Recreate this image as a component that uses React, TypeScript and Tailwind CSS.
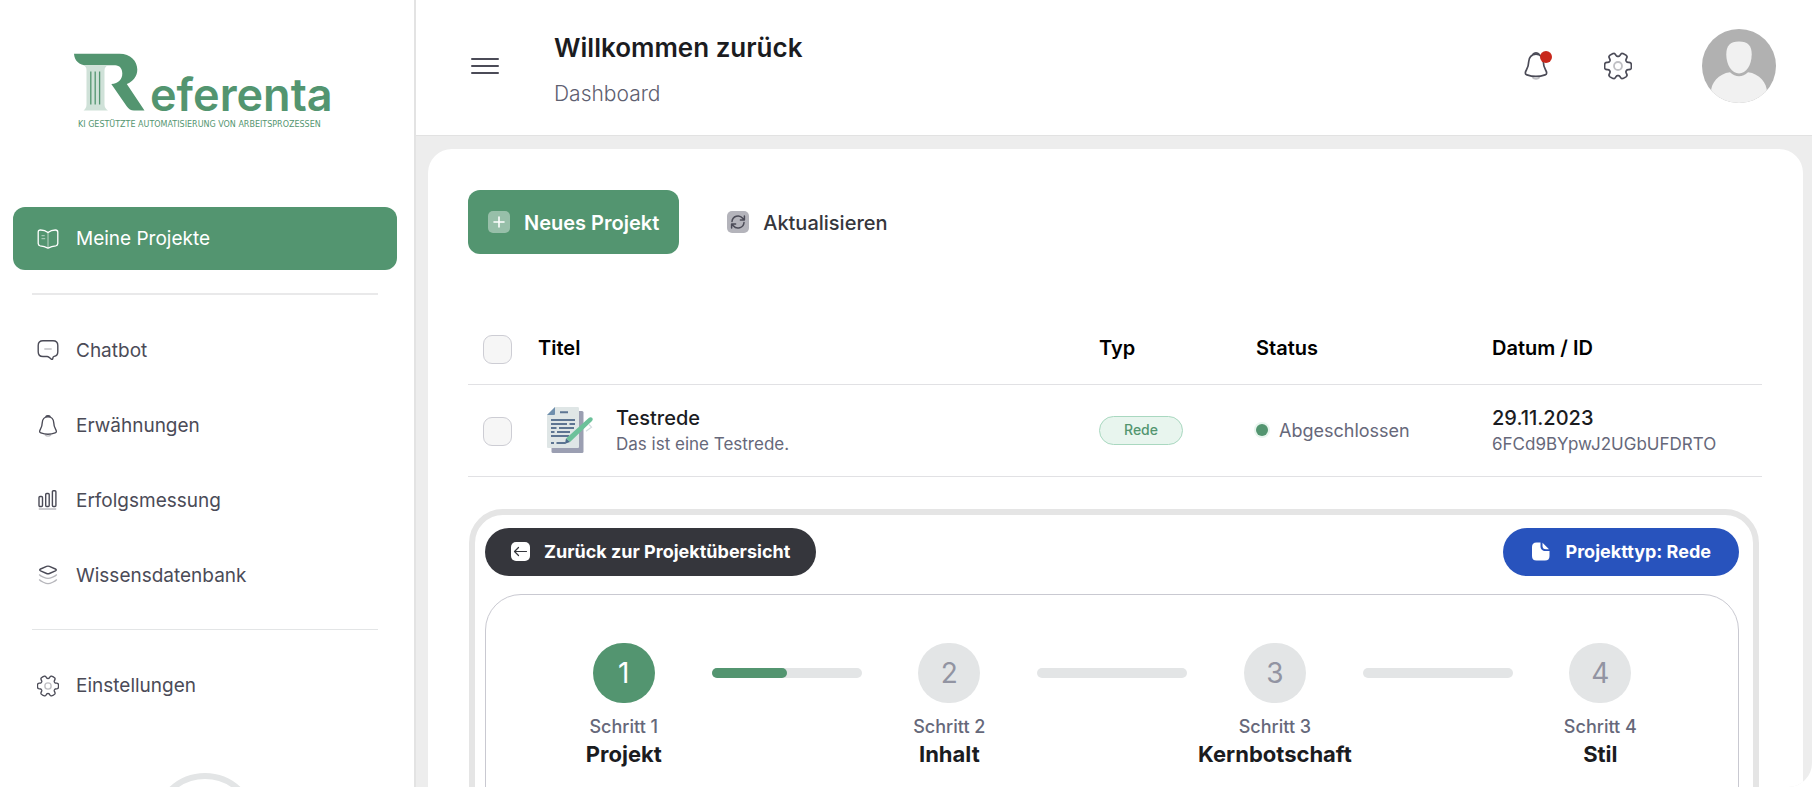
import { useState, type ReactNode } from "react";

interface INavItem {
  label: string;
  icon: ReactNode;
}

interface IProject {
  id: string;
  title: string;
  description: string;
  type: string;
  status: string;
  date: string;
}

const projects: IProject[] = [
  {
    id: "6FCd9BYpwJ2UGbUFDRTO",
    title: "Testrede",
    description: "Das ist eine Testrede.",
    type: "Rede",
    status: "Abgeschlossen",
    date: "29.11.2023",
  },
];

const steps = [
  { label: "Schritt 1", name: "Projekt", progress: 50 },
  { label: "Schritt 2", name: "Inhalt", progress: 0 },
  { label: "Schritt 3", name: "Kernbotschaft", progress: 0 },
  { label: "Schritt 4", name: "Stil", progress: 0 },
];

// Outline of a gear with six wide teeth, centred in a 28x28 box
function gearPath(): string {
  const points: string[] = [];
  for (let deg = 0; deg < 360; deg += 2) {
    const a = (deg * Math.PI) / 180;
    const r = 11.4 + 2 * Math.tanh(2.4 * (Math.cos(6 * a) + 0.35));
    points.push(`${(14 + r * Math.cos(a)).toFixed(2)} ${(14 + r * Math.sin(a)).toFixed(2)}`);
  }
  return `M${points.join("L")}Z`;
}

const GEAR_PATH = gearPath();

function GearIcon({ className }: { className: string }) {
  return (
    <svg viewBox="0 0 28 28" className={className} fill="none" stroke="currentColor" aria-hidden="true">
      <path d={GEAR_PATH} strokeWidth="1.7" strokeLinejoin="round" />
      <circle cx="14" cy="14" r="4" strokeWidth="1.8" opacity="0.35" />
    </svg>
  );
}

function BellIcon({ className }: { className: string }) {
  return (
    <svg viewBox="0 0 24 28" className={className} fill="none" stroke="currentColor" aria-hidden="true">
      <path
        d="M12 2.2c-4.4 0-7.2 3.3-7.3 7.5-.1 3.2-.7 5.6-2.300 8.300-1.300 2.200-1.700 4.100.5 4.900 5.500 1.900 12.700 1.900 18.200 0 2.200-.8 1.800-2.700.5-4.900-1.600-2.700-2.200-5.100-2.300-8.300-.1-4.200-2.900-7.500-7.300-7.500z"
        strokeWidth="1.7"
        strokeLinejoin="round"
      />
      <path d="M9 2.3c1.5-1.800 4.500-1.800 6 0" strokeWidth="1.8" />
      <path d="M8.300 25.200c1.900 2.200 5.500 2.200 7.400 0" strokeWidth="1.8" opacity="0.35" />
    </svg>
  );
}

function BookIcon() {
  return (
    <svg viewBox="0 0 22 20" className="h-5 w-[22px]" fill="none" stroke="currentColor" aria-hidden="true">
      <path
        d="M11 3.500C9.500 2.300 6.500 1 3.600 1 2 1 1.200 1.700 1.200 3.200v11.400c0 1.300.7 2 2 2.200 2.700.3 5.600 1.200 7.800 2.300 2.200-1.100 5.100-2 7.800-2.300 1.300-.2 2-.9 2-2.200V3.200c0-1.500-.8-2.200-2.400-2.200-2.900 0-5.900 1.300-7.400 2.500z"
        strokeWidth="1.3"
        strokeLinejoin="round"
      />
      <path d="M11 3.500v15.400M4.500 6.700h3.200M4.500 9.700h3.700" strokeWidth="1" opacity="0.6" />
    </svg>
  );
}

function ChatIcon() {
  return (
    <svg viewBox="0 0 22 22" className="size-[22px]" fill="none" stroke="currentColor" aria-hidden="true">
      <path
        d="M6 .7h10c3.200 0 4.800 1.600 4.800 4.800v6.200c0 2.700-1.300 4.300-3.700 4.700-.9.200-1.100.7-1.200 1.500-.1 1.500-.7 1.900-1.900 1-.9-.7-2.100-2.400-3.800-2.400H6c-3.200 0-4.800-1.600-4.800-4.800V5.500C1.200 2.300 2.800.7 6 .7z"
        strokeWidth="1.4"
        strokeLinejoin="round"
      />
      <path d="M7.300 9h7.400" strokeWidth="1.3" opacity="0.4" />
    </svg>
  );
}

function ChartIcon() {
  return (
    <svg viewBox="0 0 22 22" className="size-[22px]" fill="none" stroke="currentColor" aria-hidden="true">
      <rect x="2" y="6.500" width="3.500" height="10" rx="1" strokeWidth="1.4" />
      <rect x="8.700" y="3.500" width="3.500" height="13" rx="1" strokeWidth="1.4" />
      <rect x="15.400" y=".700" width="3.500" height="15.800" rx="1" strokeWidth="1.4" />
      <path d="M1.800 19h17.400" strokeWidth="1.4" opacity="0.4" />
    </svg>
  );
}

function LayersIcon() {
  return (
    <svg viewBox="0 0 22 22" className="size-[22px]" fill="none" stroke="currentColor" aria-hidden="true">
      <path
        d="M9.600 1.400c.9-.4 1.900-.4 2.800 0l6 2.600c1.200.6 1.200 1.300 0 1.900l-6 2.600c-.9.400-1.900.4-2.800 0l-6-2.600c-1.200-.6-1.200-1.300 0-1.900z"
        strokeWidth="1.4"
        strokeLinejoin="round"
      />
      <path d="M2.200 9.500c1.500 1.700 6.500 3.900 8.800 3.900s7.300-2.200 8.800-3.900" strokeWidth="1.3" opacity="0.4" />
      <path d="M2.200 14.500c1.500 1.700 6.500 4.200 8.800 4.200s7.300-2.500 8.800-4.200" strokeWidth="1.3" opacity="0.4" />
    </svg>
  );
}

function DocumentPenIcon() {
  return (
    <svg viewBox="0 0 46 46" className="size-[46px] shrink-0" fill="none" aria-hidden="true">
      <rect x="4.500" y="4" width="32" height="42" rx="1.500" fill="#9b9fb2" />
      <path d="M8 0h22.500c1 0 1.500.5 1.500 1.500v38c0 1-.5 1.500-1.500 1.500h-29C.5 41 0 40.500 0 39.500V8z" fill="#dfe6e6" />
      <path d="M8 0v6.500C8 7.500 7.500 8 6.500 8H0z" fill="#6f8fad" />
      <path
        d="M13 5.300h8M4 13h24M4 17h16M22.500 17H28M4 21h5.500M12 21h15M4 25h3.500M10 25h13M4 29h18M4 36h3M9.500 36h9"
        stroke="#5d7592"
        strokeWidth="1.900"
      />
      <path d="M19 31.500 42 10.800c2.500-1.800 5 1 3 3.200L23 35z" fill="#6cc19a" />
      <path d="m19 31.500 4 3.500-5 1.700z" fill="#4d6b8a" />
      <path d="m42 17.500 2.500 2.700-5.500 4" stroke="#d4dce0" strokeWidth="1.200" />
    </svg>
  );
}

function Logo() {
  return (
    <a href="#" aria-label="Referenta" className="mx-auto block w-[262px] text-[#539570]">
      <div className="flex items-end">
        <svg viewBox="0 0 71 58" className="h-[58px] w-[71px] shrink-0" aria-hidden="true">
          <path
            d="M0 .7h45.500C56.500.7 63.300 8 63.300 16.500c0 6.500-4 12-10.500 14.500L70.500 57.500H60c-3 0-5.500-1.500-7.300-4.300L37.300 31C44.500 30.500 48.300 26.500 48.300 20.500c0-5-2.800-8-7-8.200H13C5 12.300.5 7.500 0 .7z"
            fill="currentColor"
          />
          <path d="M9.500 12.300H34c-2 1-3.500 2.500-3.500 5v34c0 3 1 4.500 3.500 6.200H9.500c2.200-1.700 3-3.200 3-6.200v-34c0-2.500-1-4-3-5z" fill="#cfe1d8" />
          <path d="M16.800 18.500v33M21.200 18.500v33M25.600 18.500v33" stroke="#539570" strokeWidth="1.3" />
        </svg>
        <span className="-mb-[9px] ml-[5px] font-[Inter,sans-serif] text-[45px] leading-[50px] font-semibold">
          eferenta
        </span>
      </div>
      <div className="mt-[10px] ml-1 font-['DejaVu_Sans',sans-serif] text-[8px] leading-[8px] whitespace-nowrap">
        KI GESTÜTZTE AUTOMATISIERUNG VON ARBEITSPROZESSEN
      </div>
    </a>
  );
}

const mainNav: INavItem[] = [
  { label: "Chatbot", icon: <ChatIcon /> },
  { label: "Erwähnungen", icon: <BellIcon className="size-[22px]" /> },
  { label: "Erfolgsmessung", icon: <ChartIcon /> },
  { label: "Wissensdatenbank", icon: <LayersIcon /> },
];

function NavLink({ label, icon, active }: INavItem & { active?: boolean }) {
  return (
    <a
      href="#"
      className={`flex h-[63px] items-center gap-[17px] rounded-xl px-6 text-[19px] ${
        active ? "bg-[#539570] text-white" : "text-[#4b4b57]"
      }`}
    >
      {icon}
      <span className="pt-[2px]">{label}</span>
    </a>
  );
}

function Sidebar() {
  return (
    <aside className="flex w-[416px] shrink-0 flex-col overflow-hidden border-r-2 border-[#e3e3e3] bg-white pr-[17px] pl-[13px]">
      <div className="h-[207px] shrink-0 pt-[53px]">
        <Logo />
      </div>
      <nav className="shrink-0">
        <NavLink label="Meine Projekte" icon={<BookIcon />} active />
        <hr className="mx-[19px] mt-[23px] mb-6 border-t-2 border-[#e9e9ea]" />
        <div className="flex flex-col gap-3">
          {mainNav.map((item) => (
            <NavLink key={item.label} {...item} />
          ))}
        </div>
        <hr className="mx-[19px] mt-[22px] mb-6 border-[#e3e5e6]" />
        <NavLink label="Einstellungen" icon={<GearIcon className="size-[22px]" />} />
      </nav>
      <div className="mx-auto mt-14 size-[104px] shrink-0 rounded-full border-[6px] border-[#e3e5e6]" />
    </aside>
  );
}

function Header() {
  return (
    <header className="flex h-[136px] shrink-0 items-center border-b border-[#e2e2e2] bg-white pr-9 pb-[3px] pl-[55px]">
      <button aria-label="Menü" className="flex w-7 flex-col gap-[5px] text-[#4b4b57]">
        <span className="h-[2px] rounded-full bg-current" />
        <span className="h-[2px] rounded-full bg-current" />
        <span className="h-[2px] rounded-full bg-current" />
      </button>
      <div className="ml-[55px] flex-1 pt-[7px]">
        <h1 className="text-[26px] leading-8 font-semibold text-[#1b1c1f]">Willkommen zurück</h1>
        <p className="mt-4 text-[21px] leading-7 font-light text-[#5e6070]">Dashboard</p>
      </div>
      <button aria-label="Benachrichtigungen" className="relative mr-14 text-[#4b4b57]">
        <BellIcon className="h-7 w-6" />
        <span className="absolute -top-px -right-1 size-3 rounded-full bg-[#c8281c]" />
      </button>
      <button aria-label="Einstellungen" className="mr-[70px] text-[#4b4b57]">
        <GearIcon className="size-7" />
      </button>
      <button aria-label="Profil">
        <svg viewBox="0 0 74 74" className="size-[74px]" aria-hidden="true">
          <clipPath id="avatar">
            <circle cx="37" cy="37" r="37" />
          </clipPath>
          <g clipPath="url(#avatar)">
            <rect width="74" height="74" fill="#b1b1b1" />
            <path d="M9 63c0-9 7.500-18.500 19-19.800 5.500 5.300 12.500 5.300 18 0C57.500 44.500 65 54 65 63v11H9z" fill="#f1f1f1" />
            <path d="M37 12.500c9 0 12.700 4 12.700 13C49.700 36 44 44.500 37 44.500S24.300 36 24.300 25.500c0-9 3.700-13 12.700-13z" fill="#f1f1f1" />
          </g>
        </svg>
      </button>
    </header>
  );
}

function Toolbar() {
  return (
    <div className="flex items-center gap-7 text-xl">
      <button className="flex h-16 items-center gap-[14px] rounded-xl bg-[#539570] px-5 font-semibold text-white">
        <svg viewBox="0 0 22 22" className="size-[22px]" fill="none" aria-hidden="true">
          <rect width="22" height="22" rx="5" fill="#fff" fillOpacity="0.4" />
          <path d="M11 6v10M6 11h10" stroke="#fff" strokeWidth="1.600" strokeLinecap="round" />
        </svg>
        <span className="pt-[2px]">Neues Projekt</span>
      </button>
      <button className="flex h-16 items-center gap-[14px] px-5 font-medium text-[#35363c]">
        <svg viewBox="0 0 22 22" className="size-[22px]" fill="none" aria-hidden="true">
          <rect width="22" height="22" rx="5" fill="#b4b4bb" />
          <path
            d="M5 10.500a6 6 0 0 1 10.700-3.200L17.200 9M17.400 5v4h-4M17 11.500a6 6 0 0 1-10.700 3.200L4.800 13M4.600 17v-4h4"
            stroke="#4b4b57"
            strokeWidth="1.500"
            strokeLinecap="round"
            strokeLinejoin="round"
          />
        </svg>
        <span className="pt-[2px]">Aktualisieren</span>
      </button>
    </div>
  );
}

function Checkbox({ label, checked, onChange }: { label: string; checked: boolean; onChange: () => void }) {
  return (
    <input
      type="checkbox"
      aria-label={label}
      checked={checked}
      onChange={onChange}
      className="mt-[3px] block size-[29px] appearance-none rounded-[9px] border border-[#cdcdd4] bg-[#f6f6f6] checked:bg-[#539570]"
    />
  );
}

function ProjectTable() {
  const [selected, setSelected] = useState<string[]>([]);

  const toggle = (id: string) =>
    setSelected((prev) => (prev.includes(id) ? prev.filter((s) => s !== id) : [...prev, id]));
  const allSelected = selected.length === projects.length;

  return (
    <table className="mt-[59px] w-full table-fixed text-left">
      <thead>
        <tr className="h-[71px] border-b border-[#e1e1e4] text-xl text-black">
          <th className="w-[70px] pl-[15px]">
            <Checkbox
              label="Alle auswählen"
              checked={allSelected}
              onChange={() => setSelected(allSelected ? [] : projects.map((p) => p.id))}
            />
          </th>
          <th className="font-semibold">Titel</th>
          <th className="w-[157px] font-semibold">Typ</th>
          <th className="w-[236px] font-semibold">Status</th>
          <th className="w-[270px] font-semibold">Datum / ID</th>
        </tr>
      </thead>
      <tbody>
        {projects.map((project) => (
          <tr key={project.id} className="h-[92px] border-b border-[#e1e1e4]">
            <td className="pl-[15px]">
              <Checkbox
                label={project.title}
                checked={selected.includes(project.id)}
                onChange={() => toggle(project.id)}
              />
            </td>
            <td>
              <div className="flex items-center gap-[23px] pl-[9px]">
                <DocumentPenIcon />
                <div className="pt-[2px]">
                  <div className="text-xl leading-[26px] font-medium text-[#1b1c1f]">{project.title}</div>
                  <div className="text-[17px] leading-[26px] text-[#66687a]">{project.description}</div>
                </div>
              </div>
            </td>
            <td>
              <span className="inline-flex h-[29px] items-center rounded-full border border-[#a9d8c0] bg-[#e8f5ee] px-6 text-sm font-medium text-[#539570]">
                {project.type}
              </span>
            </td>
            <td>
              <span className="flex items-center gap-[11px] text-[18px] text-[#66687a]">
                <span className="size-3 rounded-full bg-[#539570] ring-2 ring-[#e8f5ee]" />
                {project.status}
              </span>
            </td>
            <td>
              <div className="pt-[2px] text-xl leading-[26px] font-medium text-[#1b1c1f]">{project.date}</div>
              <div className="text-[17px] leading-[26px] text-[#66687a]">{project.id}</div>
            </td>
          </tr>
        ))}
      </tbody>
    </table>
  );
}

function Stepper() {
  const current = 0;

  return (
    <ol className="flex px-[50px]">
      {steps.map((step, i) => (
        <li key={step.label} className={i < steps.length - 1 ? "flex grow-[325]" : "flex grow-[175]"}>
          <div className="flex w-[175px] grow flex-col items-center">
            <span
              className={`flex h-[60px] w-[62px] items-center justify-center rounded-full text-[28px] ${
                i === current ? "bg-[#539570] text-white" : "bg-[#e3e5e6] text-[#9294a2]"
              }`}
            >
              {i + 1}
            </span>
            <span className="mt-[11px] text-lg leading-[26px] font-medium text-[#66687a]">{step.label}</span>
            <span className="text-[22px] leading-7 font-bold text-[#1b1c1f]">{step.name}</span>
          </div>
          {i < steps.length - 1 && (
            <div className="mt-[25px] h-[10px] w-[150px] rounded-full bg-[#e3e5e6]">
              <div className="h-full rounded-full bg-[#539570]" style={{ width: `${step.progress}%` }} />
            </div>
          )}
        </li>
      ))}
    </ol>
  );
}

function ProjectPanel() {
  return (
    <section className="mt-8 mr-[3px] ml-px rounded-t-[34px] border-[6px] border-[#e5e5e5] pt-[13px] pr-[14px] pb-10 pl-[10px]">
      <div className="flex items-center justify-between text-lg font-bold text-white">
        <button className="flex h-12 items-center gap-[14px] rounded-full bg-[#35363c] px-[26px]">
          <svg viewBox="0 0 19 19" className="size-[19px]" fill="none" aria-hidden="true">
            <rect width="19" height="19" rx="5" fill="#fff" />
            <path
              d="M15.500 9.500h-12M7.500 5.500l-4 4 4 4"
              stroke="#35363c"
              strokeWidth="1.200"
              strokeLinecap="round"
              strokeLinejoin="round"
            />
          </svg>
          Zurück zur Projektübersicht
        </button>
        <button className="flex h-12 items-center gap-4 rounded-full bg-[#2853bd] px-7">
          <svg viewBox="0 0 19 19" className="size-[19px]" fill="#fff" aria-hidden="true">
            <path d="M5.500.5h4v3.700C9.500 7 11.500 9 14.500 9h4v5c0 3-1.500 4.500-4.500 4.500H5.500C2.500 18.500 1 17 1 14V5C1 2 2.500.5 5.500.5z" />
            <path d="M11.500.800 18 7.300h-3c-2.300 0-3.500-1.300-3.500-3.300z" />
          </svg>
          Projekttyp: Rede
        </button>
      </div>
      <div className="mt-[18px] rounded-t-[36px] border border-[#c9c9d1] pt-12 pb-24">
        <Stepper />
      </div>
    </section>
  );
}

export default function App() {
  return (
    <div className="flex h-screen overflow-hidden bg-white font-[Inter,sans-serif]">
      <Sidebar />
      <div className="flex min-w-0 flex-1 flex-col">
        <Header />
        <main className="min-h-0 flex-1 overflow-hidden rounded-br-3xl bg-[#ededed] pt-[13px] pr-[9px] pl-3">
          <div className="rounded-t-3xl bg-white pt-[41px] pr-[41px] pb-10 pl-10">
            <Toolbar />
            <ProjectTable />
            <ProjectPanel />
          </div>
        </main>
      </div>
    </div>
  );
}
